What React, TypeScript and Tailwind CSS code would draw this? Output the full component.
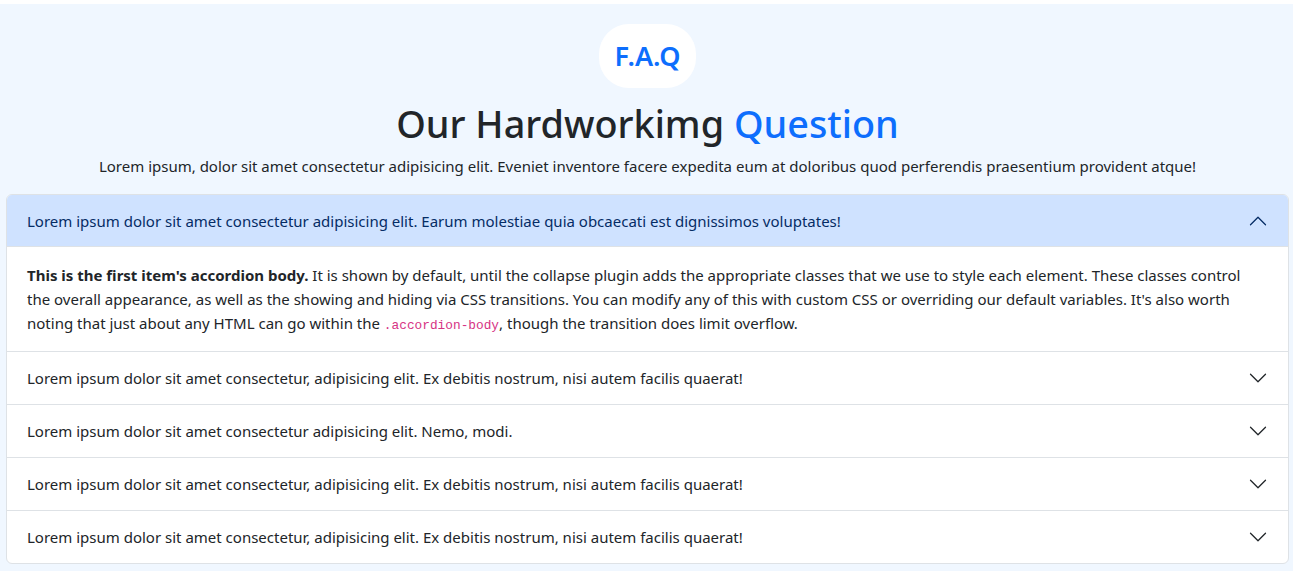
import { useState } from 'react';

const items = [
  {
    q: 'Lorem ipsum dolor sit amet consectetur adipisicing elit. Earum molestiae quia obcaecati est dignissimos voluptates!',
  },
  { q: 'Lorem ipsum dolor sit amet consectetur, adipisicing elit. Ex debitis nostrum, nisi autem facilis quaerat!' },
  { q: 'Lorem ipsum dolor sit amet consectetur adipisicing elit. Nemo, modi.' },
  { q: 'Lorem ipsum dolor sit amet consectetur, adipisicing elit. Ex debitis nostrum, nisi autem facilis quaerat!' },
  { q: 'Lorem ipsum dolor sit amet consectetur, adipisicing elit. Ex debitis nostrum, nisi autem facilis quaerat!' },
];

function Chevron({ open }: { open: boolean }) {
  return (
    <svg
      viewBox="0 0 16 16"
      fill="none"
      stroke={open ? '#052c65' : '#212529'}
      strokeLinecap="round"
      strokeLinejoin="round"
      className={open ? 'h-5 w-5 shrink-0 rotate-180' : 'h-5 w-5 shrink-0'}
    >
      <path d="M2 5L8 11L14 5" />
    </svg>
  );
}

export default function App() {
  const [open, setOpen] = useState(0);

  return (
    <div className="min-h-screen bg-white pt-1 font-['Noto_Sans',sans-serif] text-[#212529]">
      <section className="bg-[#f0f7ff] pb-2 pl-[6px] pr-[4px] pt-5">
        <div className="flex flex-col items-center">
          <div className="flex h-16 items-center rounded-[30px] bg-white px-4 text-[27px] font-semibold text-[#0d6efd]">
            F.A.Q
          </div>
          <h2 className="mt-3 text-[37.8px] font-medium leading-[48px]">
            Our Hardworkimg <span className="text-[#0d6efd]">Question</span>
          </h2>
          <p className="mb-4 mt-[6px] text-[15px] leading-6">
            Lorem ipsum, dolor sit amet consectetur adipisicing elit. Eveniet inventore facere expedita eum at doloribus
            quod perferendis praesentium provident atque!
          </p>
        </div>

        <div className="overflow-hidden rounded-md border border-[#dee2e6] bg-white">
          {items.map((item, i) => {
            const isOpen = open === i;
            return (
              <div key={i} className={i > 0 ? 'border-t border-[#dee2e6]' : ''}>
                <button
                  onClick={() => setOpen(isOpen ? -1 : i)}
                  className={
                    isOpen
                      ? 'flex h-[52px] w-full items-center justify-between bg-[#cfe2ff] px-5 text-left text-[15px] text-[#052c65] shadow-[inset_0_-1px_0_#dee2e6]'
                      : 'flex h-[52px] w-full items-center justify-between px-5 text-left text-[15px] text-[#212529]'
                  }
                >
                  <span>{item.q}</span>
                  <Chevron open={isOpen} />
                </button>
                {isOpen && (
                  <div className="py-4 pl-5 pr-8 text-[15px] leading-6">
                    <strong className="font-bold">This is the first item's accordion body.</strong> It is shown by
                    default, until the collapse plugin adds the appropriate classes that we use to style each element.
                    These classes control the overall appearance, as well as the showing and hiding via CSS transitions.
                    You can modify any of this with custom CSS or overriding our default variables. It's also worth
                    noting that just about any HTML can go within the{' '}
                    <code className="font-['Liberation_Mono',monospace] text-[12.8px] leading-none text-[#d63384]">
                      .accordion-body
                    </code>
                    , though the transition does limit overflow.
                  </div>
                )}
              </div>
            );
          })}
        </div>
      </section>
    </div>
  );
}
